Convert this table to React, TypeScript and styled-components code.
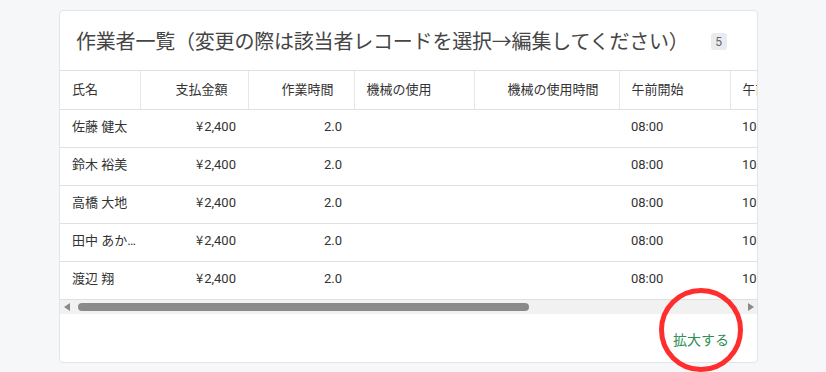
import React from 'react';
import styled, { createGlobalStyle } from 'styled-components';

const GlobalStyle = createGlobalStyle`
  html, body {
    margin: 0;
    padding: 0;
    background: #f6f7f9;
    font-family: Roboto, "Noto Sans CJK JP", sans-serif;
  }
`;

type Col = { key: string; label: string; width: number; align?: 'left' | 'right'; tight?: boolean };

const columns: Col[] = [
  { key: 'name', label: '氏名', width: 80, tight: true },
  { key: 'pay', label: '支払金額', width: 108, align: 'right' },
  { key: 'hours', label: '作業時間', width: 106, align: 'right' },
  { key: 'machine', label: '機械の使用', width: 120 },
  { key: 'machineHours', label: '機械の使用時間', width: 145, align: 'right' },
  { key: 'amStart', label: '午前開始', width: 111 },
  { key: 'amEnd', label: '午前終了', width: 111 },
  { key: 'pmStart', label: '午後開始', width: 111 },
  { key: 'pmEnd', label: '午後終了', width: 133 },
];

const tableWidth = columns.reduce((s, c) => s + c.width, 0);
const viewWidth = 697;

const names = ['佐藤 健太', '鈴木 裕美', '高橋 大地', '田中 あかり', '渡辺 翔'];

const rows = names.map((name) => ({
  name,
  pay: 2400,
  hours: '2.0',
  machine: '',
  machineHours: '',
  amStart: '08:00',
  amEnd: '10:00',
  pmStart: '',
  pmEnd: '',
}));

type Row = (typeof rows)[number];

const renderCell = (r: Row, key: string) => {
  if (key === 'pay') {
    return (
      <>
        <Yen>¥</Yen>
        {r.pay.toLocaleString('en-US')}
      </>
    );
  }
  return (r as unknown as Record<string, string>)[key];
};

const App = () => {
  const thumbRatio = viewWidth / tableWidth;
  return (
    <Page>
      <GlobalStyle />
      <Card>
        <CardHeader>
          <Title>作業者一覧（変更の際は該当者レコードを選択→編集してください）</Title>
          <Badge>5</Badge>
        </CardHeader>
        <Scroller>
          <Table style={{ width: tableWidth }}>
            <colgroup>
              {columns.map((c) => (
                <col key={c.key} style={{ width: c.width }} />
              ))}
            </colgroup>
            <thead>
              <tr>
                {columns.map((c) => (
                  <Th key={c.key} $align={c.align}>
                    {c.label}
                  </Th>
                ))}
              </tr>
            </thead>
            <tbody>
              {rows.map((r) => (
                <tr key={r.name}>
                  {columns.map((c) => (
                    <Td key={c.key} $align={c.align} $tight={c.tight}>
                      {renderCell(r, c.key)}
                    </Td>
                  ))}
                </tr>
              ))}
            </tbody>
          </Table>
        </Scroller>
        <ScrollBar>
          <Arrow $dir="left" />
          <Track>
            <Thumb style={{ width: `${thumbRatio * 100}%` }} />
          </Track>
          <Arrow $dir="right" />
        </ScrollBar>
        <Footer>
          <ExpandLink>拡大する</ExpandLink>
          <Circle />
        </Footer>
      </Card>
    </Page>
  );
};

const Page = styled.div`
  padding: 10px 68px 9px 59px;
`;

const Card = styled.section`
  background: #fff;
  border: 1px solid #e2e4e8;
  border-radius: 4px;
`;

const CardHeader = styled.div`
  height: 59px;
  display: flex;
  align-items: center;
  padding: 0 16px;
  gap: 22px;
`;

const Title = styled.h2`
  margin: 0;
  font-size: 20px;
  font-weight: 400;
  color: #454545;
  letter-spacing: -0.2px;
`;

const Badge = styled.span`
  display: inline-flex;
  align-items: center;
  justify-content: center;
  min-width: 16px;
  height: 17px;
  border-radius: 3px;
  background: #e9ebef;
  color: #666;
  font-size: 12px;
  margin-top: 2px;
`;

const Scroller = styled.div`
  overflow: hidden;
  border-top: 1px solid #e0e0e0;
`;

const Table = styled.table`
  border-collapse: collapse;
  table-layout: fixed;
  font-size: 13px;
  line-height: 16px;
  color: #333;
`;

const Th = styled.th<{ $align?: string }>`
  box-sizing: border-box;
  height: 38px;
  font-weight: 400;
  text-align: ${(p) => p.$align || 'left'};
  padding: ${(p) => (p.$align === 'right' ? '0 20px 0 12px' : '0 12px')};
  border-right: 1px solid #e6e6e6;
  border-bottom: 1px solid #e0e0e0;
  white-space: nowrap;
  overflow: hidden;
  &:last-child {
    border-right: none;
  }
`;

const Td = styled.td<{ $align?: string; $tight?: boolean }>`
  box-sizing: border-box;
  height: 38px;
  text-align: ${(p) => p.$align || 'left'};
  padding: ${(p) => (p.$tight ? '0 2px 3px 12px' : '0 12px 3px')};
  border-bottom: 1px solid #e0e0e0;
  white-space: nowrap;
  overflow: hidden;
  text-overflow: ellipsis;
`;

const Yen = styled.span`
  font-family: "Noto Sans CJK JP", sans-serif;
  margin-right: 1px;
`;

const ScrollBar = styled.div`
  height: 14px;
  background: #f1f1f1;
  display: flex;
  align-items: center;
`;

const Arrow = styled.span<{ $dir: 'left' | 'right' }>`
  flex: none;
  width: 14px;
  display: flex;
  justify-content: center;
  &::before {
    content: '';
    width: 0;
    height: 0;
    border-top: 4px solid transparent;
    border-bottom: 4px solid transparent;
    ${(p) =>
      p.$dir === 'left'
        ? 'border-right: 6px solid #8a8a8a; margin-left: -1px;'
        : 'border-left: 6px solid #8a8a8a; margin-right: -1px;'}
  }
`;

const Track = styled.div`
  flex: 1;
  height: 8px;
  padding: 0 2px 0 4px;
`;

const Thumb = styled.div`
  height: 8px;
  border-radius: 4px;
  background: #8a8a8a;
`;

const Footer = styled.div`
  position: relative;
  height: 48px;
  display: flex;
  align-items: center;
  justify-content: flex-end;
  padding: 0 28px 0 16px;
`;

const ExpandLink = styled.a`
  font-size: 14px;
  color: #2f8f55;
  cursor: pointer;
  margin-top: 2px;
`;

const Circle = styled.div`
  position: absolute;
  right: 14px;
  top: -26px;
  width: 74px;
  height: 74px;
  border: 5px solid #ff2e2e;
  border-radius: 50%;
  pointer-events: none;
`;

export default App;
